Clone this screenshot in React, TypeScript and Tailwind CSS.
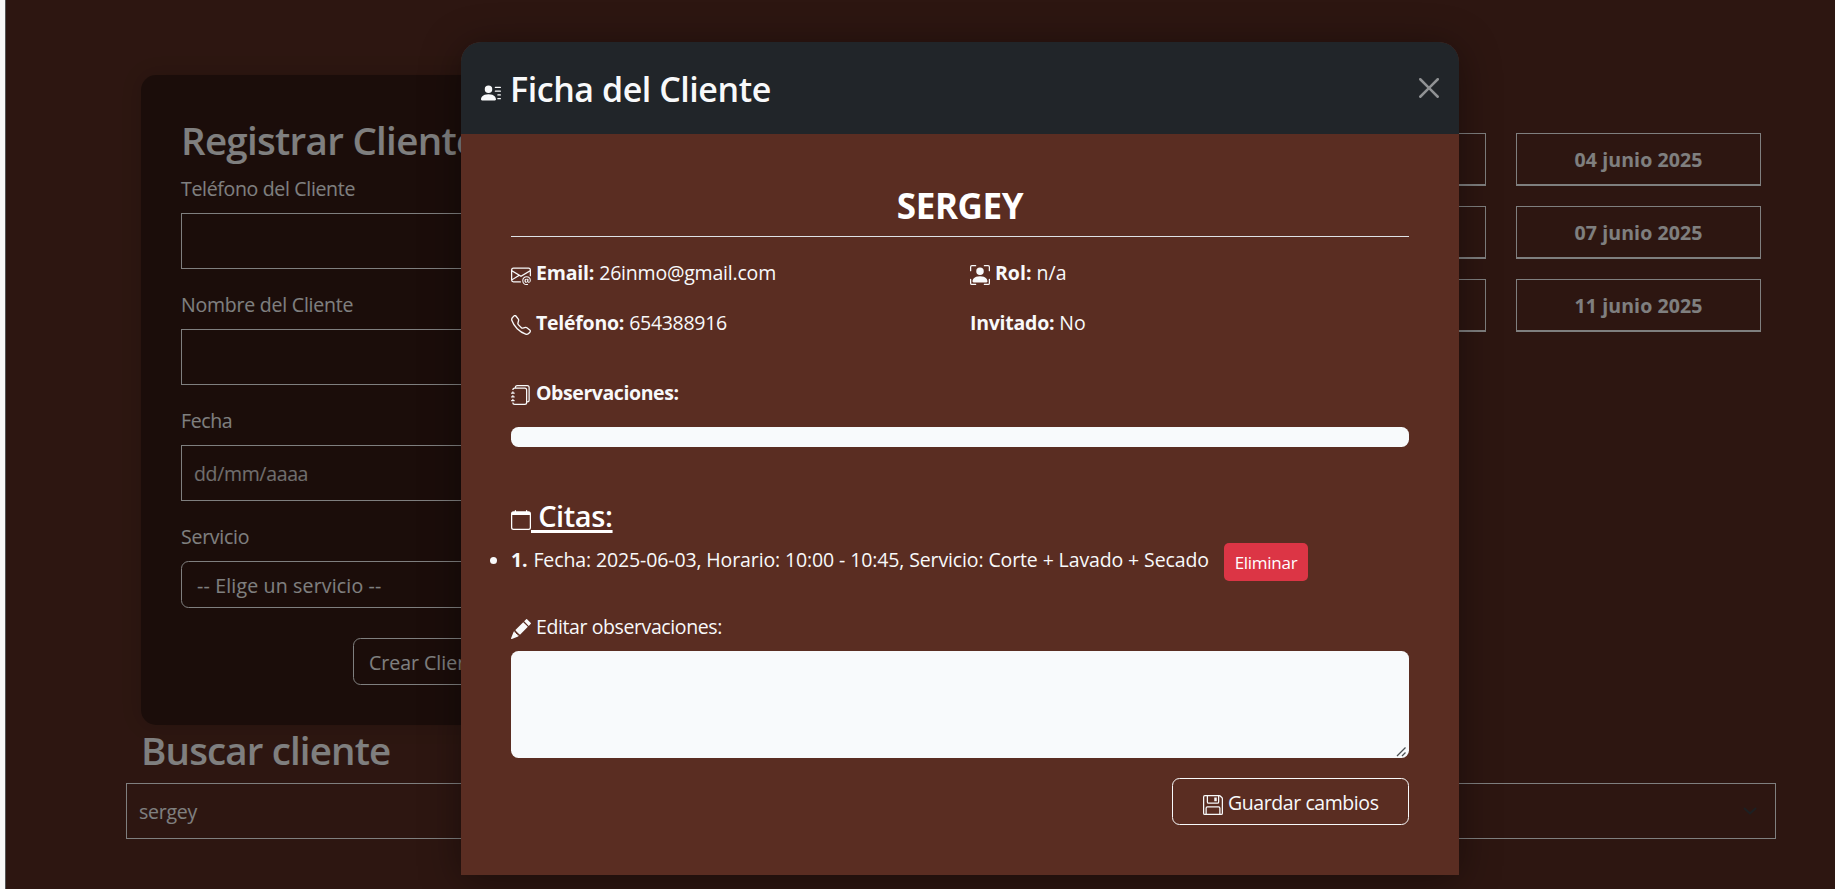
import React from 'react';
import type { ReactNode } from 'react';
import {
  BsCalendar,
  BsEnvelopeAt,
  BsFloppy,
  BsJournals,
  BsPencilFill,
  BsPersonBoundingBox,
  BsPersonLinesFill,
  BsTelephone,
} from 'react-icons/bs';

const dateRows: [string, string][] = [
  ['', '04 junio 2025'],
  ['', '07 junio 2025'],
  ['', '11 junio 2025'],
];

function Field({ label, tracking, children }: { label: string; tracking: string; children: ReactNode }) {
  return (
    <div className="mb-5">
      <div className={`mb-2 leading-[32px] ${tracking}`}>{label}</div>
      {children}
    </div>
  );
}

function Detail({ icon, children }: { icon?: ReactNode; children: ReactNode }) {
  return (
    <div className="flex h-[30px] items-start gap-[5px]">
      {icon}
      <div className="whitespace-pre leading-[32px]">{children}</div>
    </div>
  );
}

function RegisterCard() {
  return (
    <section className="h-[650px] w-[574px] rounded-[15px] bg-black/40 p-10 shadow-[0_0_20px_rgba(0,0,0,0.15)]">
      <h2 className="mb-2 text-[38.5px] font-semibold leading-[50px] tracking-[-0.7px]">Registrar Cliente</h2>
      <Field label="Teléfono del Cliente" tracking="tracking-[-0.32px]">
        <div className="h-14 border border-white" />
      </Field>
      <Field label="Nombre del Cliente" tracking="tracking-[-0.22px]">
        <div className="h-14 border border-white" />
      </Field>
      <Field label="Fecha" tracking="tracking-[-0.4px]">
        <div className="flex h-14 items-center border border-white px-3 pt-0.5 tracking-[-0.35px] text-white/85">dd/mm/aaaa</div>
      </Field>
      <Field label="Servicio" tracking="tracking-[-0.25px]">
        <div className="flex h-[47px] items-center rounded-[7.5px] border border-white px-[15px] pt-0.5 tracking-[0.18px]">
          -- Elige un servicio --
        </div>
      </Field>
      <div className="mt-[30px] flex justify-center">
        <button className="h-[47px] w-[150px] rounded-[7.5px] border border-white pt-0.5">Crear Cliente</button>
      </div>
    </section>
  );
}

function DateGrid() {
  return (
    <div className="mt-[58px] grid grid-cols-[245px_245px] content-start gap-x-[30px] gap-y-5">
      {dateRows.flat().map((date, i) => (
        <div
          key={i}
          className="flex h-[53px] items-center justify-center border border-b-2 border-white pt-0.5 font-bold tracking-[0.1px]"
        >
          {date}
        </div>
      ))}
    </div>
  );
}

function ClientModal() {
  return (
    <div className="flex h-[833px] w-[998px] flex-col rounded-t-[20px] bg-[#5a2d22] text-[#f8f9fa] shadow-[0_5px_40px_rgba(0,0,0,0.4)]">
      <header className="flex h-[92px] shrink-0 items-start rounded-t-[20px] bg-[#212529] p-5">
        <BsPersonLinesFill className="mt-[21px] size-5 shrink-0" />
        <h1 className="ml-[9px] text-[34px] font-semibold leading-[54px] tracking-[-0.45px]">Ficha del Cliente</h1>
        <svg className="ml-auto mt-4 size-5 text-[#909294]" viewBox="0 0 16 16" fill="currentColor">
          <path d="M.293.293a1 1 0 0 1 1.414 0L8 6.586 14.293.293a1 1 0 1 1 1.414 1.414L9.414 8l6.293 6.293a1 1 0 0 1-1.414 1.414L8 9.414l-6.293 6.293a1 1 0 0 1-1.414-1.414L6.586 8 .293 1.707a1 1 0 0 1 0-1.414z" />
        </svg>
      </header>
      <div className="flex flex-col p-[50px]">
        <h2 className="border-b border-[#dee2e6] pb-2 text-center text-[35px] font-bold leading-[44px] tracking-[-0.4px] text-white">
          SERGEY
        </h2>
        <div className="mt-5 grid grid-cols-[459px_1fr] gap-y-5">
          <Detail icon={<BsEnvelopeAt className="mt-2 size-5" />}>
            <b className="tracking-[-0.2px]">Email:</b> <span className="tracking-[-0.2px]">26inmo@gmail.com</span>
          </Detail>
          <Detail icon={<BsPersonBoundingBox className="mt-2 size-5" />}>
            <b>Rol:</b> n/a
          </Detail>
          <Detail icon={<BsTelephone className="mt-2 size-5" />}>
            <b className="tracking-[-0.25px]">Teléfono:</b> <span className="tracking-[-0.3px]">654388916</span>
          </Detail>
          <Detail>
            <b className="tracking-[-0.25px]">Invitado:</b> No
          </Detail>
        </div>
        <div className="mt-10">
          <Detail icon={<BsJournals className="mt-2 size-5" />}>
            <b className="tracking-[-0.42px]">Observaciones:</b>
          </Detail>
        </div>
        <div className="mt-5 h-5 rounded-[7.5px] bg-[#f8fafc]" />
        <h3 className="mt-[50px] flex h-9 items-start text-[29px] font-semibold leading-[38px] text-white">
          <BsCalendar className="mt-[13px] size-5" />
          <span className="whitespace-pre tracking-[-0.4px] underline decoration-[3px] underline-offset-[3px]"> Citas:</span>
        </h3>
        <div className="-ml-[21px] mt-2.5 flex h-[38px] items-start">
          <span className="mt-[14px] size-[7px] rounded-full bg-[#f8f9fa]" />
          <span className="ml-[14px] mt-px whitespace-pre leading-[32px] tracking-[-0.12px]">
            <b className="mr-px">1.</b> Fecha: 2025-06-03, Horario: 10:00 - 10:45, Servicio: Corte + Lavado + Secado
          </span>
          <button className="ml-auto mr-[101px] h-[38px] w-[84px] rounded-[5px] bg-[#dc3545] pt-px text-[17px] tracking-[-0.28px] text-white">
            Eliminar
          </button>
        </div>
        <div className="mt-[30px]">
          <Detail icon={<BsPencilFill className="mt-2 size-5" />}>
            <span className="tracking-[-0.4px]">Editar observaciones:</span>
          </Detail>
        </div>
        <div className="relative mt-2.5">
          <textarea className="block h-[107px] w-full resize-none rounded-[7.5px] bg-[#f8fafc]" />
          <svg className="absolute bottom-px right-0.5 size-[11px]" viewBox="0 0 11 11" stroke="#4b4f52" strokeWidth="1.3">
            <path d="M1 10L9.500 1.500M6 10L9.500 6.500" />
          </svg>
        </div>
        <button className="mt-5 flex h-[47px] w-[237px] items-start self-end rounded-[7.5px] border border-[#f8f9fa] pl-[30px] pt-2">
          <BsFloppy className="mt-2 size-5" />
          <span className="ml-[5px] leading-[32px] tracking-[-0.42px]">Guardar cambios</span>
        </button>
      </div>
    </div>
  );
}

export default function App() {
  return (
    <div className="relative flex h-[889px] w-[1835px] overflow-hidden bg-[#f8f8f8] font-['Open_Sans',sans-serif] text-[19.5px]">
      <main className="ml-[5px] flex-1 border-l border-[#aaaaaa] bg-[#5a2d22] text-white">
        <div className="ml-[135px] mt-[75px] flex w-[1620px] justify-between">
          <RegisterCard />
          <DateGrid />
        </div>
        <h2 className="mb-2 ml-[135px] text-[38.5px] font-semibold leading-[50px] tracking-[-0.85px]">Buscar cliente</h2>
        <div className="ml-[120px] flex h-14 w-[1650px] items-center justify-between border border-white pl-3 pr-[18px]">
          <span className="pt-0.5 tracking-[-0.25px]">sergey</span>
          <svg className="h-2 w-[14px]" viewBox="0 0 14 8" fill="none" stroke="#3a3f44" strokeWidth="2">
            <path d="M1 1l6 5.5L13 1" />
          </svg>
        </div>
      </main>
      <div className="absolute inset-y-0 left-[5px] right-0 bg-black/50 pl-[456px] pt-[42px]">
        <ClientModal />
      </div>
    </div>
  );
}
